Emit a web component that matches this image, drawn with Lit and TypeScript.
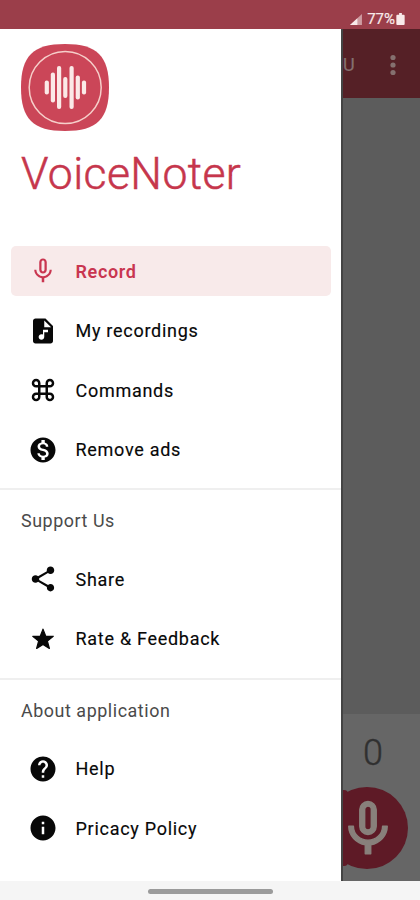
import { LitElement, html, css, svg } from "lit";
import { customElement } from "lit/decorators.js";

const micPath = "M12 14c1.66 0 3-1.34 3-3V5c0-1.66-1.34-3-3-3S9 3.34 9 5v6c0 1.66 1.34 3 3 3zm-1.2-9.1c0-.66.54-1.2 1.2-1.2s1.2.54 1.2 1.2l-.01 6.2c0 .66-.53 1.2-1.19 1.2s-1.2-.54-1.2-1.2V4.9zm6.5 6.1c0 3-2.54 5.1-5.3 5.1S6.7 14 6.7 11H5c0 3.41 2.72 6.23 6 6.72V21h2v-3.28c3.28-.48 6-3.3 6-6.72h-1.7z";

const icons: Record<string, unknown> = {
  mic: svg`<path d=${micPath} />`,
  audio: svg`<path d="M14 2H6c-1.1 0-1.99.9-1.99 2L4 20c0 1.1.89 2 1.99 2H18c1.1 0 2-.9 2-2V8l-6-6zm2 11h-3v3.75c0 1.24-1.01 2.25-2.25 2.25S8.500 17.990 8.500 16.750s1.010-2.250 2.250-2.250c.46 0 .89.14 1.250.38V11h4v2zm-3-4V3.500L18.500 9H13z" />`,
  command: svg`<path d="M17.500 3C15.570 3 14 4.570 14 6.500V8h-4V6.500C10 4.570 8.430 3 6.500 3S3 4.570 3 6.500 4.570 10 6.500 10H8v4H6.500C4.570 14 3 15.570 3 17.500S4.570 21 6.500 21s3.500-1.570 3.500-3.500V16h4v1.500c0 1.930 1.570 3.500 3.500 3.500s3.500-1.570 3.500-3.500-1.570-3.500-3.500-3.500H16v-4h1.500c1.930 0 3.500-1.570 3.500-3.500S19.430 3 17.500 3zM16 8V6.500c0-.83.67-1.500 1.500-1.500s1.500.67 1.500 1.500S18.330 8 17.500 8H16zM6.500 8C5.670 8 5 7.330 5 6.500S5.670 5 6.500 5 8 5.670 8 6.500V8H6.500zm3.500 6v-4h4v4h-4zm7.500 5c-.83 0-1.500-.67-1.500-1.500V16h1.500c.83 0 1.500.67 1.500 1.500s-.67 1.500-1.500 1.500zm-11 0c-.83 0-1.500-.67-1.500-1.500S5.670 16 6.500 16H8v1.500c0 .83-.67 1.500-1.500 1.500z" />`,
  money: svg`<path d="M12 2C6.480 2 2 6.480 2 12s4.480 10 10 10 10-4.480 10-10S17.520 2 12 2zm1.410 16.090V20h-2.670v-1.930c-1.710-.36-3.160-1.460-3.270-3.400h1.960c.1 1.050.82 1.870 2.650 1.870 1.960 0 2.400-.98 2.400-1.590 0-.83-.44-1.610-2.670-2.140-2.480-.6-4.180-1.620-4.180-3.670 0-1.720 1.390-2.840 3.110-3.210V4h2.670v1.950c1.860.45 2.790 1.860 2.850 3.390H14.300c-.05-1.110-.64-1.870-2.220-1.870-1.500 0-2.400.68-2.400 1.640 0 .84.65 1.390 2.670 1.910s4.180 1.390 4.180 3.910c-.01 1.830-1.380 2.830-3.120 3.160z" />`,
  share: svg`<path d="M18 16.080c-.76 0-1.440.3-1.960.77L8.910 12.700c.05-.23.09-.46.09-.7s-.04-.47-.09-.7l7.050-4.110c.54.5 1.250.81 2.040.81 1.660 0 3-1.340 3-3s-1.340-3-3-3-3 1.340-3 3c0 .24.04.47.09.7L8.040 9.810C7.500 9.310 6.790 9 6 9c-1.660 0-3 1.340-3 3s1.340 3 3 3c.79 0 1.500-.31 2.040-.81l7.120 4.160c-.05.21-.08.43-.08.65 0 1.610 1.310 2.920 2.920 2.920s2.920-1.310 2.920-2.920-1.310-2.920-2.920-2.920z" />`,
  star: svg`<path d="M12 16.300 17.100 19.500 15.500 13.700 20.200 9.800H14.200L12 4.100 9.800 9.800H3.800L8.500 13.700 6.900 19.500z" stroke="currentColor" stroke-width="1" stroke-linejoin="round" />`,
  help: svg`<path d="M12 2C6.480 2 2 6.480 2 12s4.480 10 10 10 10-4.480 10-10S17.520 2 12 2zm1 17h-2v-2h2v2zm2.070-7.750-.9.920C13.450 12.900 13 13.500 13 15h-2v-.5c0-1.100.45-2.100 1.170-2.830l1.240-1.260c.37-.36.59-.86.59-1.410 0-1.100-.9-2-2-2s-2 .9-2 2H8c0-2.210 1.790-4 4-4s4 1.790 4 4c0 .88-.36 1.680-.93 2.250z" />`,
  info: svg`<path d="M12 2C6.480 2 2 6.480 2 12s4.480 10 10 10 10-4.480 10-10S17.520 2 12 2zm1 15h-2v-6h2v6zm0-8h-2V7h2v2z" />`,
};

interface Entry { icon: string; label: string; active?: boolean }
interface Section { title?: string; items: Entry[] }

const sections: Section[] = [
  { items: [
    { icon: "mic", label: "Record", active: true },
    { icon: "audio", label: "My recordings" },
    { icon: "command", label: "Commands" },
    { icon: "money", label: "Remove ads" },
  ] },
  { title: "Support Us", items: [
    { icon: "share", label: "Share" },
    { icon: "star", label: "Rate & Feedback" },
  ] },
  { title: "About application", items: [
    { icon: "help", label: "Help" },
    { icon: "info", label: "Pricacy Policy" },
  ] },
];

const waveBars = [[25.7, 14], [31.8, 30], [38, 43], [44.200, 21], [50.500, 43], [56.700, 24], [62.900, 14]];

@customElement("app-root")
export class AppRoot extends LitElement {
  static styles = css`
    :host { display: flex; flex-direction: column; width: 420px; height: 900px; overflow: hidden; font-family: Roboto, "Liberation Sans", sans-serif; background: #fff; }
    * { box-sizing: border-box; }
    svg { display: block; fill: currentColor; flex: none; }
    .status { height: 29px; flex: none; background: #9b3e4a; color: #f8e9e9; display: flex; justify-content: flex-end; align-items: flex-start; padding: 9.500px 15px 0 0; font-size: 15px; line-height: 19px; -webkit-text-stroke: 0.2px currentColor; }
    .signal { margin: 4px 5px 0 0; }
    .battery { margin: 3.500px 0 0 1px; }
    .main { display: flex; flex: none; height: 852px; }
    .drawer { width: 341px; flex: none; background: #fff; }
    .header { height: 211px; padding: 15px 21px 0; }
    .brand { margin: 13px 0 0; color: #c6364c; font-size: 44.500px; line-height: 60px; font-weight: 300; letter-spacing: 0.4px; -webkit-text-stroke: 0.5px currentColor; white-space: nowrap; }
    .section { padding: 5px 10px 0; height: 189.500px; border-top: 2px solid #efefef; }
    .section:first-of-type { height: 248px; padding-top: 6px; border: 0; }
    .title { height: 50px; line-height: 51px; padding-left: 11px; font-size: 17.900px; letter-spacing: 0.55px; color: #4a4a4a; margin-bottom: 9px; }
    .item { height: 50px; display: flex; align-items: center; gap: 18px; padding-left: 17.500px; margin-bottom: 9.500px; border-radius: 5px; font-size: 18px; font-weight: 400; -webkit-text-stroke: 0.15px currentColor; letter-spacing: 0.72px; color: #080808; white-space: nowrap; }
    .item.active { background: #f8eaea; color: #c93650; font-weight: 600; -webkit-text-stroke: 0; letter-spacing: 0.65px; margin-left: 0.500px; padding-left: 17px; }
    .page { flex: 1; display: flex; flex-direction: column; overflow: hidden; background: #5c5c5c; border-left: 2px solid #444; }
    .bar { height: 69px; flex: none; background: #552026; color: #85706f; display: flex; align-items: center; padding: 2px 0 0 0; font-size: 18px; font-weight: 400; -webkit-text-stroke: 0.2px currentColor; }
    .dots { margin-left: 34px; }
    .content { flex: 1; }
    .controls { height: 167px; flex: none; background: #666; padding-top: 18px; display: flex; flex-direction: column; }
    .count { font-size: 36px; line-height: 42px; color: #303030; font-weight: 300; padding-left: 20px; -webkit-text-stroke: 0.4px currentColor; }
    .fab { position: relative; width: 82px; height: 82px; margin: 13px 0 0 -17px; border-radius: 50%; background: #5e1a26; color: #88807b; display: flex; align-items: center; justify-content: center; }
    .fab::before { content: ""; position: absolute; left: 15px; top: 3px; width: 7px; height: 76px; border-radius: 0 4px 4px 0; background: #5e1a26; }
    .fab svg { position: relative; margin: 1px 0 0 1px; }
    .nav { flex: 1; background: #f5f5f5; display: flex; justify-content: center; padding-top: 8px; }
    .handle { width: 125px; height: 5px; border-radius: 3px; background: #9b9b9b; }
  `;

  private item(e: Entry) {
    return html`<div class="item ${e.active ? "active" : ""}">
      <svg width="30" height="30" viewBox="0 0 24 24">${icons[e.icon]}</svg><span>${e.label}</span>
    </div>`;
  }

  render() {
    return html`
      <div class="status">
        <svg class="signal" width="12" height="11" viewBox="0 0 13 12"><path d="M0 12 13 0V12z" opacity=".55" /><path d="M0 12 8 4.600V12z" /></svg>
        <span>77%</span>
        <svg class="battery" width="9" height="12" viewBox="0 0 9 13"><path d="M3 0h3v2h2q1 0 1 1v9q0 1-1 1H1q-1 0-1-1V3q0-1 1-1h2z" /></svg>
      </div>
      <div class="main">
        <div class="drawer">
          <div class="header">
            <svg width="88" height="87" viewBox="0 0 88 87">
              <path fill="#cb4658" d="M44 0C76 0 88 12 88 43.500S76 87 44 87 0 75 0 43.500 12 0 44 0z" />
              <circle cx="44.200" cy="43.500" r="36" fill="none" stroke="#f6cfca" stroke-width="1.500" />
              ${waveBars.map(([x, h]) => svg`<rect x=${x - 2} y=${43.5 - h / 2} width="4.200" height=${h} rx="2" fill="#fbe9e7" />`)}
            </svg>
            <h1 class="brand">VoiceNoter</h1>
          </div>
          ${sections.map((s) => html`<section class="section">
            ${s.title ? html`<div class="title">${s.title}</div>` : ""}
            ${s.items.map((e) => this.item(e))}
          </section>`)}
        </div>
        <div class="page">
          <div class="bar"><span>U</span>
            <svg class="dots" width="8" height="22" viewBox="0 0 8 22"><circle cx="4" cy="3.500" r="2.600" /><circle cx="4" cy="11" r="2.600" /><circle cx="4" cy="18.500" r="2.600" /></svg>
          </div>
          <div class="content"></div>
          <div class="controls">
            <div class="count">0</div>
            <div class="fab"><svg width="66" height="66" viewBox="0 0 24 24"><path d=${micPath} stroke="currentColor" stroke-width=".5" stroke-linejoin="round" /></svg></div>
          </div>
        </div>
      </div>
      <div class="nav"><div class="handle"></div></div>
    `;
  }
}
